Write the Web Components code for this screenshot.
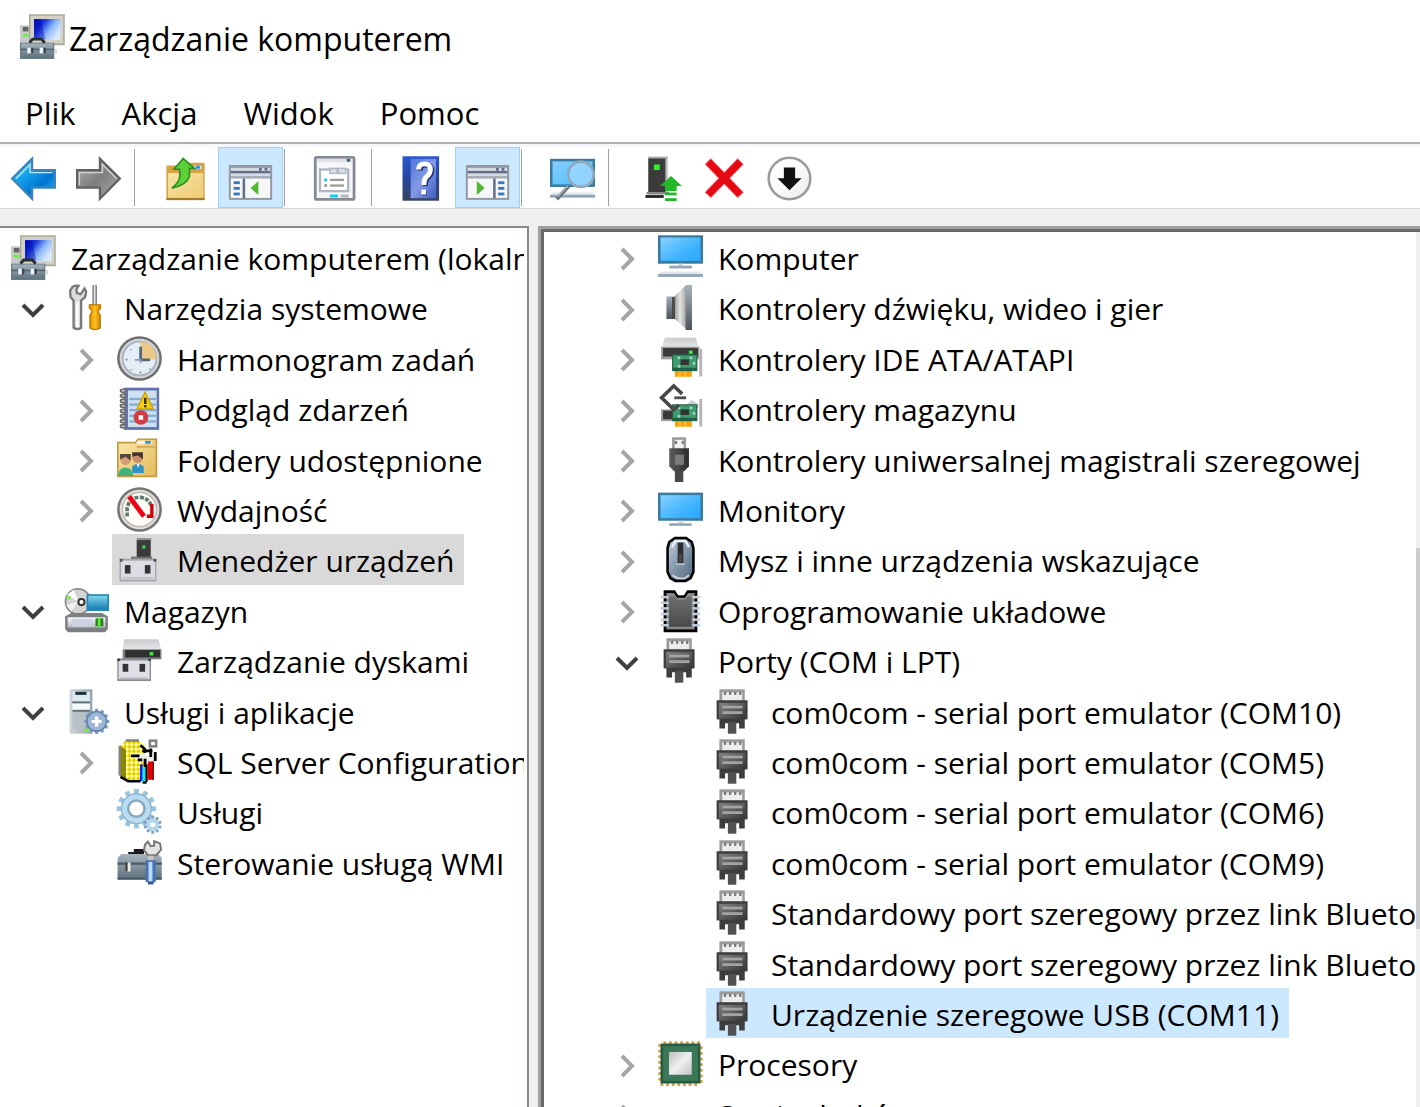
<!DOCTYPE html>
<html lang="pl">
<head>
<meta charset="utf-8">
<title>Zarządzanie komputerem</title>
<style>
  html, body { margin: 0; height: 100%; }
  body { background: #fff; color: #000; font: 31px/50px "Open Sans", "Noto Sans", sans-serif; overflow: hidden; }
</style>
</head>
<body>
<console-window>
  <title-bar slot="title" icon="computer">Zarządzanie komputerem</title-bar>
  <menu-bar slot="menu">
    <menu-entry>Plik</menu-entry>
    <menu-entry>Akcja</menu-entry>
    <menu-entry>Widok</menu-entry>
    <menu-entry>Pomoc</menu-entry>
  </menu-bar>
  <tool-bar slot="tools">
    <tool-button icon="back" label="Wstecz"></tool-button>
    <tool-button icon="forward" label="Dalej"></tool-button>
    <tool-separator></tool-separator>
    <tool-button icon="folder-up" label="W górę"></tool-button>
    <tool-button icon="tree-toggle" label="Drzewo konsoli" pressed></tool-button>
    <tool-separator></tool-separator>
    <tool-button icon="properties" label="Właściwości"></tool-button>
    <tool-separator></tool-separator>
    <tool-button icon="help" label="Pomoc"></tool-button>
    <tool-button icon="action-toggle" label="Okienko akcji" pressed></tool-button>
    <tool-separator></tool-separator>
    <tool-button icon="scan" label="Skanuj"></tool-button>
    <tool-separator></tool-separator>
    <tool-button icon="update" label="Aktualizuj sterownik"></tool-button>
    <tool-button icon="remove" label="Odinstaluj"></tool-button>
    <tool-button icon="disable" label="Wyłącz"></tool-button>
  </tool-bar>
  <tree-pane slot="left" kind="plain">
    <tree-row level="0" icon="computer">Zarządzanie komputerem (lokalny)</tree-row>
    <tree-row level="1" icon="tools" state="open">Narzędzia systemowe</tree-row>
    <tree-row level="2" icon="clock" state="closed">Harmonogram zadań</tree-row>
    <tree-row level="2" icon="events" state="closed">Podgląd zdarzeń</tree-row>
    <tree-row level="2" icon="shared" state="closed">Foldery udostępnione</tree-row>
    <tree-row level="2" icon="gauge" state="closed">Wydajność</tree-row>
    <tree-row level="2" icon="devmgr" selected="muted">Menedżer urządzeń</tree-row>
    <tree-row level="1" icon="storage" state="open">Magazyn</tree-row>
    <tree-row level="2" icon="disk">Zarządzanie dyskami</tree-row>
    <tree-row level="1" icon="services-apps" state="open">Usługi i aplikacje</tree-row>
    <tree-row level="2" icon="sql" state="closed">SQL Server Configuration Manager</tree-row>
    <tree-row level="2" icon="gears">Usługi</tree-row>
    <tree-row level="2" icon="wmi">Sterowanie usługą WMI</tree-row>
  </tree-pane>
  <tree-pane slot="right" kind="sunken" scroll>
    <tree-row level="2" icon="pc" state="closed">Komputer</tree-row>
    <tree-row level="2" icon="speaker" state="closed">Kontrolery dźwięku, wideo i gier</tree-row>
    <tree-row level="2" icon="ide" state="closed">Kontrolery IDE ATA/ATAPI</tree-row>
    <tree-row level="2" icon="storage-ctl" state="closed">Kontrolery magazynu</tree-row>
    <tree-row level="2" icon="usb" state="closed">Kontrolery uniwersalnej magistrali szeregowej</tree-row>
    <tree-row level="2" icon="monitor" state="closed">Monitory</tree-row>
    <tree-row level="2" icon="mouse" state="closed">Mysz i inne urządzenia wskazujące</tree-row>
    <tree-row level="2" icon="firmware" state="closed">Oprogramowanie układowe</tree-row>
    <tree-row level="2" icon="port" state="open">Porty (COM i LPT)</tree-row>
    <tree-row level="3" icon="port">com0com - serial port emulator (COM10)</tree-row>
    <tree-row level="3" icon="port">com0com - serial port emulator (COM5)</tree-row>
    <tree-row level="3" icon="port">com0com - serial port emulator (COM6)</tree-row>
    <tree-row level="3" icon="port">com0com - serial port emulator (COM9)</tree-row>
    <tree-row level="3" icon="port">Standardowy port szeregowy przez link Bluetooth</tree-row>
    <tree-row level="3" icon="port">Standardowy port szeregowy przez link Bluetooth</tree-row>
    <tree-row level="3" icon="port" selected="active">Urządzenie szeregowe USB (COM11)</tree-row>
    <tree-row level="2" icon="cpu" state="closed">Procesory</tree-row>
    <tree-row level="2" icon="drive" state="closed">Stacje dysków</tree-row>
  </tree-pane>
</console-window>

<script>
// Gradient helper: lin(id, x2, y2, colour, colour, ...) over the shape's box.
const lin = (id, x2, y2, ...c) => `<linearGradient id="${id}" x1="0" y1="0" x2="${x2}" y2="${y2}">` +
  c.map((k, i) => `<stop offset="${i / (c.length - 1)}" stop-color="${k}"/>`).join('') + '</linearGradient>';
const r = (x, y, w, h, f, extra = '') => `<rect x="${x}" y="${y}" width="${w}" height="${h}" fill="${f}" ${extra}/>`;
const teeth = (cx, cy, r0, n, w, fill) => Array.from({ length: n }, (_, i) =>
  `<rect x="${cx - w / 2}" y="${cy - r0}" width="${w}" height="${r0}" fill="${fill}" transform="rotate(${i * 360 / n} ${cx} ${cy})"/>`).join('');

const card = `<rect x="14.7" y="4.6" width="1" height="9.8" fill="#b4b4b4"/>` + r(6, 12.2, 6, 2.3, '#f5a30a') +
  r(7.6, 12.2, .4, 2.3, '#ffd060') + r(9.4, 12.2, .4, 2.3, '#ffd060') +
  r(5, 6.5, 9, 6, '#1f6243') + r(5.4, 6.9, 8.2, 4.4, '#3f9b70') + r(8, 8.3, 3, 2, '#333') +
  r(7, 7.3, .9, .9, '#a9d9c0') + r(7, 10.3, .9, .9, '#a9d9c0') + r(11.3, 7.3, .9, .9, '#a9d9c0') + r(12.3, 9.3, .9, .9, '#a9d9c0');
const paneIcon = body => r(.3, 3.2, 15.4, 12.4, '#9098a2') + r(1, 4.2, 14, 1.2, '#d5dae3') + r(11, 4.2, 1, 1, '#5b6b88') + r(13, 4.2, 1, 1, '#5b6b88') +
  r(1, 5.3, 14, .8, '#5f6e89') + r(1, 6.2, 14, 1.1, '#d5dae3') + r(1, 7.2, 14, .8, '#a4abb6') + r(1, 8, 14, 6.9, '#f7f7f7') + body;
const wrench = `<path d="M3.1 .6 2.2 2 2.3 4.3 3.4 5.5V15.2Q4.7 16.2 6.1 15.2V5.5L7.5 4.3 7.9 2.4 7.3 1.2 5.9 3.3 4.6 2.9 4.4 1.6 5.2.3Q4 .1 3.1 .6Z" fill="#dcdcdc" stroke="#777" stroke-width=".8"/>`;

const ICONS = {
  computer: `<defs>${lin('a', 1, .6, '#0008b8', '#1634dc', '#8db8fa', '#dcebff')}${lin('b', 0, 1, '#a2b1ba', '#5d7380')}</defs>` +
    r(0, 4, 3.3, 7, '#c9cbcb') + r(1, 4.6, 2, 1.6, '#666') + r(1, 7, 2, 1, '#66ee44') +
    r(3.2, .1, 12.7, 11, '#aaa798') + r(3.7, .6, 11.7, 9.9, '#d3d0c5') + r(5, 1.8, 9.4, 7.4, 'url(#a)') +
    `<path d="M7.4 2 9 9H5V2z" fill="#0006a8" opacity=".4"/>` +
    r(0, 10.2, 12.2, 5.8, '#6a7c87') + r(.4, 10.5, 11.4, 5.1, 'url(#b)') + r(0, 12.3, 12.2, .6, '#56666f') +
    `<path d="M3.4 10.2 4.5 8.9H7.6L8.8 10.2" fill="none" stroke="#282c30" stroke-width="1"/>` +
    r(2.6, 12, 1.2, 2, '#eef3f5') + r(4, 12, .7, 2, '#39444b') + r(7, 12, 1.2, 2, '#eef3f5') + r(8.5, 12, .7, 2, '#39444b') + r(12.3, 12.5, .9, 1.5, '#d8d8d8'),
  tools: `<defs>${lin('a', 1, 0, '#d88a00', '#ffc421', '#d08000')}</defs>` + wrench + r(4.3, 6, .9, 9, '#fff') +
    r(10.1, .1, 1.6, 7, '#777') + r(10.6, .3, .6, 6.7, '#e8e8e8') +
    `<path d="M9 7H13V8.3L12.1 9.3 12.9 10.8V15.3Q11 16.4 9.2 15.3V10.8L10 9.3 9 8.3Z" fill="url(#a)" stroke="#b87500" stroke-width=".4"/>`,
  clock: `<circle cx="8" cy="8" r="7.5" fill="#d6d8d9" stroke="#707070" stroke-width=".9"/><circle cx="8" cy="8" r="6" fill="#e4eef7" stroke="#a8b4bf" stroke-width=".7"/>
    <path d="M8.3 8V2Q13.8 2.4 14 8.4Z" fill="#ecc988"/><path d="M8.4 3.8V8.5H11.8" fill="none" stroke="#52697b" stroke-width="1"/><path d="M6.3 8.5H8.4V9.6" fill="none" stroke="#8fa2b0" stroke-width=".6"/>
    <g fill="#8397a6"><circle cx="3.4" cy="8.4" r=".4"/><circle cx="8.3" cy="13" r=".4"/><circle cx="5" cy="12" r=".3"/><circle cx="5" cy="4.8" r=".3"/><circle cx="11.8" cy="11.8" r=".3"/></g>`,
  events: r(2.4, .6, 12.6, 15, '#5f73ad') + r(3.9, 1.6, 10.2, 13, '#cfe0f1') +
    [4.2, 6.2, 8.2, 10.2, 12.2].map(y => r(4.4, y, 9.5, .8, '#7fadd3')).join('') + r(2.8, 1.2, .8, 13.6, '#6d7cb4') +
    [1, 2.8, 4.6, 6.4, 8.2, 10, 11.8, 13.6].map(y => `<ellipse cx="2.2" cy="${y + .7}" rx="1" ry=".6" fill="#b8b8b8" stroke="#666" stroke-width=".5"/>`).join('') +
    `<path d="M10 2.2 12.9 8.2H7.1Z" fill="#f0cd1c" stroke="#c9a400" stroke-width=".5"/>` + r(9.6, 4.2, .9, 2.2, '#403300') + r(9.6, 6.8, .9, .8, '#403300') +
    `<circle cx="8.5" cy="11.2" r="2.6" fill="#d23c43"/><rect x="7.7" y="10.4" width="1.6" height="1.6" fill="#fff"/>`,
  shared: `<defs>${lin('a', 1, 1, '#fbe7ac', '#e3bb5a')}</defs><path d="M.3 2H6.6L7.4.8H14V14H.3Z" fill="url(#a)" stroke="#c39a42" stroke-width=".6"/>` +
    r(7, 1.6, 5.4, .8, '#fff') + r(10, 1.4, 2, 1, '#2f8fec') + r(7, 3.2, 6.6, .6, '#d1a952') +
    `<circle cx="7.3" cy="7.4" r="1.8" fill="#c98f6c"/><path d="M5.4 7V5.4H9.2V8L7.5 6.6Z" fill="#41362d"/><path d="M5.4 12.8V10.5Q7.4 8.6 9.5 10.5V12.8Z" fill="#2e92c9"/><path d="M7 9.6 7.5 11 8 9.6Z" fill="#fff"/>
    <circle cx="3" cy="8.2" r="1.8" fill="#d59c7a"/><path d="M1.1 8V6H4.9V8.4L3 7Z" fill="#54463a"/><path d="M.3 13.9Q.6 10.8 3 10.8T5.8 13.9Z" fill="#3eb37e"/>`,
  gauge: `<circle cx="8" cy="8" r="7.5" fill="#e2e1df" stroke="#747474" stroke-width=".9"/><circle cx="8" cy="8" r="6.1" fill="#fffdf8" stroke="#c3bdb4" stroke-width=".6"/>
    <path d="M3.6 10.5V7.5Q4.4 3.8 8 3.6Q11.4 4 12.3 7" fill="none" stroke="#5b7a68" stroke-width="1.3" stroke-dasharray="1.4 .5"/>
    <path d="M12.4 6V10.4H10.6" fill="none" stroke="#d0000c" stroke-width="1.2"/><path d="M4.3 3.4 9.6 10.4" stroke="#f30014" stroke-width="1.7"/>`,
  devmgr: r(7, .4, 5.2, .8, '#8e8e8e') + r(7, 1.1, 5, 6.2, '#3b3b3b') + r(9, 3, 1.1, 1.1, '#36e34c') + r(5, 7, 7.5, .8, '#6f6f6f') +
    r(.9, 7.7, 13.1, 8.1, '#a5a5ae') + r(1.4, 8.4, 12.1, 6.8, '#dcdce4') + r(2, 14.2, 11, .9, '#c3c3cc') + r(2.8, 10, 2, 3, '#333') + r(9.9, 10, 2, 3, '#333') + r(1, 7.8, 1, 1, '#555') + r(13, 7.8, 1, 1, '#555'),
  storage: `<defs>${lin('a', 0, 1, '#7fd3ef', '#1782b3')}${lin('b', 0, 1, '#f7f7fa', '#b9bcc4')}</defs>
    <circle cx="5" cy="4.8" r="4.5" fill="#d4d4d4" stroke="#8b8b8b" stroke-width=".6"/><path d="M5 4.8 1 2.5 3.5.6Z" fill="#fff"/><path d="M5 4.8 .8 6 2.6 8.4Z" fill="#f1f1f1"/><circle cx="1.7" cy="3.5" r=".8" fill="#8be85b"/><circle cx="6.2" cy="5" r="1.1" fill="#fff" stroke="#333" stroke-width=".7"/>` +
    r(8, 2.2, 8, 6, '#2887ae') + r(8.6, 2.8, 6.8, 4.6, 'url(#a)') +
    `<path d="M.4 10 2.6 8.9H13.5L15.6 10V14.6L14.6 15.7H1.4L.4 14.6Z" fill="#7d7f84"/><path d="M1.3 10.4H14.7V14H1.3Z" fill="url(#b)"/>` + r(3, 11, 7, 2.6, '#cfd2e2') + r(11.2, 10.8, 2.8, 2.8, '#2e7a25') + r(12, 10.6, 1, 3.2, '#4cf02c'),
  disk: `<defs>${lin('a', 0, 1, '#c9cacc', '#e6e7e8')}</defs><path d="M2.6.4H14.8L15.7 4.2H1.9Z" fill="url(#a)"/>` + r(2, 4, 13.8, 3.6, '#7f7f82') + r(2.9, 4.3, 12.4, 2.6, '#303030') + r(11.6, 5, 1.3, 1.2, '#38f545') +
    r(.1, 7.3, 12, 8, '#8c8c95') + r(.6, 8, 11, 6.6, '#dedee5') + r(1, 14, 10, .7, '#bcbcc5') + r(2, 9.2, 2, 2.8, '#333') + r(8, 9.2, 2, 2.8, '#333') + r(.1, 7.3, 1, .9, '#444') + r(11.1, 7.3, 1, .9, '#444'),
  drive: `<path d="M1.6 6H14.4L16 9.4H0Z" fill="#d9dadb"/>` + r(0, 9.4, 16, 4, '#9d9da0') + r(.8, 10, 14.4, 2.6, '#393939') + r(12, 10.8, 1.3, 1.1, '#43f352'),
  'services-apps': `<defs>${lin('a', 1, 0, '#cfd7dc', '#99a5ad')}</defs>` + r(2, .1, 8.1, 15.8, 'url(#a)') + r(3, 1, 6.2, 3.6, '#dcebf1') + r(4, 1, 4, 1.1, '#19343f') + r(3, 4.4, 6.2, .7, '#60707a') + r(3, 5.2, 6.2, 2.4, '#f5fafc') + r(3, 7.4, 6.2, .7, '#60707a') + r(3, 8.3, 5, 6, '#b8c1c8') +
    teeth(11.6, 11.5, 4.5, 12, 1.1, '#7d9cc0') + `<circle cx="11.6" cy="11.5" r="3.5" fill="#9cb7d6" stroke="#6585ab" stroke-width=".6"/><path d="M11 9.8h1.2v1.2h1.2v1.1h-1.2v1.2H11v-1.2H9.8V11H11z" fill="#fff"/>` + r(7.1, 14.1, 2, 1.1, '#7bea4c'),
  sql: `<defs><pattern id="p" width="1.6" height="1.6" patternUnits="userSpaceOnUse"><rect width="1.6" height="1.6" fill="#ffef00"/><rect width=".8" height=".8" fill="#fff"/><rect x=".8" y=".8" width=".8" height=".8" fill="#cdbb2a"/></pattern></defs>
    <path d="M1 2.5 3 .6H7.6L9.9 2.5V14L8 15H4L1 13Z" fill="url(#p)"/><path d="M1 2.5 3.2 3.7V14.6L1 13Z" fill="#8b8600"/><path d="M3.1.5H7.8M1 2.4V13" stroke="#808080" stroke-width=".9"/><path d="M1.2 13.5 4 15H8.4" fill="none" stroke="#000" stroke-width=".9"/>
    <path d="M8.3 2.2 9.9 3.6V5" fill="none" stroke="#000" stroke-width=".9"/>` +
    r(11.7, .6, 2.2, 2, '#fff', 'stroke="#808080" stroke-width=".9"') + `<path d="M6 5H9L10 6H14V8H9L5 6Z" fill="#eee"/><path d="M5 6H8M7.4 7.4H9M9 4.2H12.6M12 6.4V3.4M13.6 4.6V7.8M10 7V10" stroke="#000" stroke-width="1" fill="none"/>` +
    r(8.2, 9, .9, 6, '#0018ff') + r(9.1, 10.4, 1, 4.8, '#00f0ff') + r(10.1, 9, .8, 6.3, '#000') + r(9.1, 15.1, 1.4, .8, '#000') + r(11, 8, 2, 6.5, '#e40000') + r(12.6, 8, .5, 6.5, '#760000'),
  gears: teeth(6.9, 7, 7, 12, 1.7, '#9cc3dc') + `<circle cx="6.9" cy="7" r="5.3" fill="#b8dcf2" stroke="#8db6d2" stroke-width=".5"/><circle cx="6.9" cy="7" r="2.9" fill="#fff" stroke="#8ba8bd" stroke-width=".9"/>` +
    teeth(12.7, 12.7, 3.2, 10, 1, '#7ba3bf') + `<circle cx="12.7" cy="12.7" r="2.3" fill="#b4d6ea"/><circle cx="12.7" cy="12.7" r=".9" fill="#fff"/>`,
  wmi: `<defs>${lin('a', 0, 1, '#a5b3bc', '#5d717f')}</defs><path d="M4 5.4V4.3H6V3.2H9.6V5.4Z" fill="#1b1b1b"/><path d="M.2 6.3 1.6 5H14.6L15.9 6.3V14H.2Z" fill="url(#a)"/>` + r(.2, 8, 15.7, .8, '#4b5c68') + r(.2, 13.4, 15.7, .7, '#46545e') + r(3, 8, .8, 3, '#463a30') + r(3.8, 8, 1, 3.2, '#efefe5') +
    `<path d="M10 1.6 11 .6 12 2.2 13.2 2V.4L15.3 1.2 15.7 3.4 14 5.4H11L9.6 3.6Z" fill="#e4e4e4" stroke="#777" stroke-width=".7"/>` + r(11, 5.6, 2, 2, '#c7c7c7') + r(10.2, 7.2, 3.6, 7.8, '#4773b5') + r(11.2, 7.8, 1.4, 7, '#bcd8fa') + r(11, 14.8, 2, 1, '#35578c'),
  pc: `<defs>${lin('a', 1, .9, '#8ad1ff', '#62c2ff', '#3eb3ff', '#2aa9ff')}</defs>` + r(0, .1, 16, 10.1, '#397a9f') + r(.9, .9, 14.2, 8.3, 'url(#a)') + r(7.3, 10.2, 1.6, .8, '#cfdae2') + r(4, 10.9, 8, 1, '#95a7b6') + `<path d="M1 13H15L16 14H0Z" fill="#dfe5e9"/>` + r(0, 13.9, 16, 1, '#91a4b4'),
  monitor: `<defs>${lin('a', 1, .9, '#8ad1ff', '#62c2ff', '#3eb3ff', '#2aa9ff')}</defs>` + r(0, 2, 16, 10, '#397a9f') + r(.9, 2.9, 14.2, 8.2, 'url(#a)') + r(7.3, 12, 1.6, .8, '#cfdae2') + r(4, 12.9, 8, .9, '#91a4b4'),
  speaker: `<defs>${lin('a', 1, 0, '#8b8b8b', '#e4e4e4', '#9e9e9e')}${lin('b', 0, 1, '#a7b3bd', '#4e5357')}${lin('c', 0, 1, '#9eacb8', '#4b545b')}</defs><path d="M5.5 4.4 9 .9 10.2.1V15.6L9 14.8 5.5 11.6Z" fill="url(#a)"/>` + r(3, 4.1, 3, 8, 'url(#c)') + r(5, 4.3, 1, 7.8, '#494949') + r(9.8, 0, 2.3, 16, 'url(#b)'),
  ide: `<defs>${lin('a', 0, 1, '#c9cacc', '#e6e7e8')}</defs><path d="M2.5.6H13.5L14.4 3.9H1.3Z" fill="url(#a)"/>` + r(1.1, 3.8, 13.6, 4.5, '#9d9da0') + r(1.8, 4.3, 12.4, 3, '#393939') + r(11, 5.2, 1.3, 1.1, '#43f352') + card,
  'storage-ctl': r(1.1, 8.3, 9, 4.2, '#9d9da0') + r(1.8, 8.8, 6, 3, '#393939') + `<path d="M9 7.5 12 5 14.4 6.5V8Z" fill="#c9cdd2"/>` + card +
    `<path d="M8.6 2.8 5.6 0 1.3 4.2 5.6 8.4 7.4 6.8" fill="none" stroke="#474747" stroke-width="1.3"/><path d="M5.8 4.2H10" stroke="#4c4c4c" stroke-width="1"/>`,
  usb: `<defs>${lin('a', 1, 0, '#5b5b5b', '#454545', '#2b2b2b')}</defs>` + r(5, .1, 5, 4.4, '#9b9b9b') + r(6, 1, 3.1, 3.4, '#f2f2f2') + r(6, 1.4, .8, 1.1, '#777') + r(8.4, 1.4, .8, 1.1, '#777') + `<path d="M4 4H11V10.4L9.3 12.2H5.7L4 10.4Z" fill="url(#a)"/>` + r(6, 6.3, 3.2, 3.6, '#7b7b7b') + r(6, 11.8, 3, 4.2, '#494949'),
  mouse: `<defs>${lin('a', 1, 1, '#c1d0df', '#8296aa', '#52667d')}</defs><path d="M6 .4H10L12 1.8 12.6 4V12.4L11.6 14.6 9.8 15.6H6.2L4.4 14.6 3.4 12.4V4L4 1.8Z" fill="url(#a)" stroke="#000" stroke-width=".9"/><path d="M5 3.6 6.2 1.4H9.8L11 3.6" fill="none" stroke="#f1f5fa" stroke-width=".8"/><path d="M5.2 13.6 7 14.7H9.4L11 13.6" fill="none" stroke="#d4dbe2" stroke-width=".6"/>` + r(7, 2, 2, 7.4, '#2c2c2c') + r(7.4, 6, 1.2, 3, '#484848') + r(6.4, 9.3, 3.2, .7, '#a8b9ca'),
  firmware: `<defs>${lin('a', 0, 1, '#6e6e6e', '#4a4a4a')}</defs><path d="M2 .8H6L7 2.4H9.4L10.4.8H14V15.7H2Z" fill="#050505"/>` + r(3, 1.8, 10, 12.9, '#8a8a8a') + `<path d="M3.9 3H6L7 4.2H9.6L10.7 3H12V13.8H3.9Z" fill="url(#a)"/><path d="M6 1 7 2.6H9.4L10.4 1Z" fill="#fff"/><path d="M5.8 1.2 7 3.1H9.4L10.6 1.2" fill="none" stroke="#000" stroke-width=".8"/>` +
    [2.8, 4.8, 6.8, 8.8, 10.8, 12.8].map(y => r(1, y, 2.8, .9, '#c1ced9') + r(12.2, y, 2.8, .9, '#c1ced9')).join(''),
  port: `<defs>${lin('a', 1, 1, '#808080', '#5c5c5c', '#343434')}</defs>` + r(3, .1, 9, 4.1, '#9b9b9b') + r(4, 1.2, 7.1, 3, '#ededed') + [4.6, 6.4, 8.2, 10].map(x => r(x, 1, .8, 1.1, '#777')).join('') +
    r(2, 4, 11, 6.8, '#3d3d3d') + r(2.8, 4.9, 9.4, 5.9, 'url(#a)') + r(4, 5.9, 7.2, 1, '#a3a3a3') + r(4, 7.9, 7.2, 1, '#a3a3a3') + `<path d="M3 10.6H12V14H10V12.2H5V14H3Z" fill="#3d3d3d"/>` + r(6, 11.8, 3, 4.1, '#515151'),
  cpu: `<defs>${lin('a', 1, 1, '#bcbcbc', '#f0f0f0', '#c3c3c3')}</defs>` + [1.9, 3.9, 5.9, 7.9, 9.9, 11.9, 13.9].map(v => r(v, .1, 1, 1.2, '#d0a145') + r(v - 1, 14.8, 1, 1.2, '#d0a145') + r(.1, v - .8, 1.2, 1, '#d0a145') + r(14.7, v, 1.2, 1, '#d0a145')).join('') +
    r(.9, .9, 14.2, 14.2, '#265b43') + r(1.8, 1.8, 12.4, 12.4, '#3a7857') + r(3.9, 3.9, 8.1, 8.1, 'url(#a)'),
  back: `<defs>${lin('a', 1, 1, '#7fdcff', '#16a6ee', '#0073cf', '#2cc4ff')}</defs><path d="M.4 8 7.5 1V5H15.6V11.2H7.5V15.2Z" fill="url(#a)" stroke="#3b85bb" stroke-width=".8"/><path d="M1.8 8 6.8 3V5.9H14.8" fill="none" stroke="#b5e6fa" stroke-width=".5"/>`,
  forward: `<defs>${lin('a', 1, 1, '#b4b4b4', '#7e7e7e', '#aaa')}</defs><path d="M15.6 8 8.5 1V5H.4V11.2H8.5V15.2Z" fill="url(#a)" stroke="#606060" stroke-width=".8"/><path d="M1.2 10.4V5.9H9.4V3L14.4 8" fill="none" stroke="#d2d2d2" stroke-width=".5"/>`,
  'folder-up': `<defs>${lin('a', 1, 1, '#f8e4a8', '#eecb70')}</defs><path d="M1.2 3.4H8.3L9.5 2.4H14.8V15.6H1.2Z" fill="#d5a548"/><path d="M1.8 6H14.3V15H1.8Z" fill="url(#a)"/>` + r(10.4, 3.6, 3.2, 1, '#fff') + r(11.6, 3.6, 1.6, .9, '#2c88ea') + r(1.2, 14.9, 13.6, .8, '#a57c27') +
    `<path d="M7.2.9 11.2 4.4H9.4V7.4Q8.3 10.4 3.2 11.4Q6.2 9 6 6.6L5.9 4.7H3.9Z" fill="#5cd238" stroke="#2b8f22" stroke-width=".6"/>`,
  'tree-toggle': paneIcon(r(2, 9, 2.2, 1, '#3277c0') + r(2, 11, 2.2, 1, '#3277c0') + r(2, 13, 2.2, 1, '#3277c0') + r(5.2, 8, .9, 7, '#5f6e89') + `<path d="M8 11.4 10.8 8.9V13.9Z" fill="#55b636"/>`),
  'action-toggle': paneIcon(r(11.8, 9, 2.2, 1, '#3277c0') + r(11.8, 11, 2.2, 1, '#3277c0') + r(11.8, 13, 2.2, 1, '#3277c0') + r(10, 8, .9, 7, '#5f6e89') + `<path d="M7 11.4 4.2 8.9V13.9Z" fill="#55b636"/>`),
  properties: r(.8, .5, 13.8, 14.9, '#f6f6f6', 'rx=".5" stroke="#858a92" stroke-width="1"') + r(1.4, 1, 12.6, 1.2, '#dfe2e6') + r(12, 1, 1.2, 1, '#475670') + r(2.5, 4.8, 10, 7.7, '#fff', 'stroke="#aeb4c1" stroke-width=".8"') +
    r(6, 4.4, 2.6, 1.8, '#dadde4', 'stroke="#aeb4c1" stroke-width=".5"') + r(9, 4.4, 2.6, 1.8, '#dadde4', 'stroke="#aeb4c1" stroke-width=".5"') + r(4, 8, 1, 1, '#19c6ef') + r(6, 8.1, 5, .8, '#999') + r(4, 10, 1, 1, '#999') + r(6, 10.1, 5, .8, '#999') + r(6, 13.7, 2.9, 1.1, '#16ccf5') + r(9.8, 13.7, 2.9, 1.1, '#bbb'),
  help: `<defs>${lin('a', 0, 1, '#2a56d0', '#27479d', '#38435f')}${lin('b', 1, 1, '#4f76e0', '#8499e5', '#3e5cc5')}</defs>` + r(.9, .1, 13, 15.8, 'url(#a)') + r(3.8, 1, 9, 14, 'url(#b)') +
    `<path d="M6.6 4.8Q6.7 2.8 8.6 2.8 10.9 2.8 10.8 5 10.7 6.4 9.2 7.6 8.5 8.4 8.5 10.3" fill="none" stroke="#26366f" stroke-width="1.8" transform="translate(.5 .4)"/><path d="M6.6 4.8Q6.7 2.8 8.6 2.8 10.9 2.8 10.8 5 10.7 6.4 9.2 7.6 8.5 8.4 8.5 10.3" fill="none" stroke="#fff" stroke-width="1.7"/>` + r(8, 12.3, 1.6, 1.7, '#26366f') + r(7.6, 11.9, 1.7, 1.8, '#fff'),
  scan: `<defs>${lin('a', 1, 1, '#86cdfc', '#4cbcff')}</defs>` + r(0, 1, 16, 10, '#397a9f') + r(.9, 1.9, 14.2, 8.2, 'url(#a)') + `<path d="M1 13H15L16 14H0Z" fill="#dfe5e9"/>` + r(0, 13.8, 16, 1, '#91a4b4') +
    `<path d="M6.8 10.6 2.4 15.4" stroke="#6d757c" stroke-width="1.3"/><path d="M6.4 10.6 2.8 14.4" stroke="#aab3bb" stroke-width=".5"/><circle cx="11" cy="6.5" r="4.5" fill="#9bd6ff" fill-opacity=".85" stroke="#8fa9ba" stroke-width=".9"/>`,
  update: r(4, .2, 7, .9, '#aaa') + r(4, .9, 6.2, 12, '#3b3b3b') + r(10.2, .8, .7, 12, '#b9b9b9') + r(6, 3, 2.1, 2, '#2bf026') + r(3.4, 12.8, 8, .9, '#888') + r(3, 13.9, 6.5, 1, '#222') +
    `<path d="M12.1 7.1 16 10.7H14.1V12.4H10V10.7H8.1Z" fill="#24b829"/>` + r(10, 13, 4.1, 1, '#24b829') + r(10, 15, 4.1, 1, '#24b829'),
  remove: `<path d="M2 1.8 13.8 14M13.8 1.8 2 14" stroke="#f7a4a9" stroke-width="3.2"/><path d="M2.2 2 13.6 13.8M13.6 2 2.2 13.8" stroke="#e50914" stroke-width="2.6"/>`,
  disable: `<defs>${lin('a', 1, 1, '#fff', '#fafafa', '#ebebeb')}</defs><circle cx="8" cy="8" r="7.4" fill="url(#a)" stroke="#9b9b9b" stroke-width=".9"/><path d="M6 4.1H10V7.9H12.3L8 12.2 3.7 7.9H6Z" fill="#111"/>`
};

const define = (name, css, html, setup) => customElements.define(name, class extends HTMLElement {
  constructor() {
    super();
    this.attachShadow({ mode: 'open' }).innerHTML = `<style>:host,*{box-sizing:border-box}${css}</style>${html(this)}`;
  }
  connectedCallback() { if (setup) setup(this); }
});

define('pixel-icon', ':host{display:block;flex:none;width:45px;height:45px}svg{display:block;width:100%;height:100%;overflow:visible}',
  el => `<svg viewBox="0 0 16 16" aria-hidden="true">${ICONS[el.getAttribute('name')] || ''}</svg>`);

define('title-bar', ':host{display:flex;align-items:flex-start;gap:4px;height:84px;padding:14px 20px;font-size:32px}',
  el => `<pixel-icon name="${el.getAttribute('icon')}"></pixel-icon><span><slot></slot></span>`);

define('menu-bar', ':host{display:flex;padding:4px 2px}', () => '<slot></slot>', el => el.setAttribute('role', 'menubar'));

define('menu-entry', ':host{display:block}button{height:50px;padding:0 23px;border:0;background:none;color:inherit;font:inherit}button:hover{background:#e5f3ff}',
  () => '<button type="button" role="menuitem"><slot></slot></button>');

define('tool-bar', ':host{display:flex;align-items:stretch;height:67px;padding:3px 1px 0;background:#fff;border-top:2px solid #b0b0b0;border-bottom:1px solid #d9d9d9;box-shadow:inset 0 3px #f5f9fe}',
  () => '<slot></slot>', el => el.setAttribute('role', 'toolbar'));

define('tool-button', ':host{display:block;width:65px}:host([pressed]){margin-right:-2px}button{display:flex;justify-content:center;align-items:center;width:100%;height:100%;padding:2px 0 0;border:1px solid transparent;background:none}button:hover{background:#e5f3ff}:host([pressed]) button{background:#cce8ff;border-color:#99d1ff}',
  el => `<button type="button" aria-label="${el.getAttribute('label')}" aria-pressed="${el.hasAttribute('pressed')}"><pixel-icon name="${el.getAttribute('icon')}"></pixel-icon></button>`);

define('tool-separator', ':host{display:block;width:22px;padding:2px 0 2px 3px}i{display:block;width:1px;height:100%;background:#a0a0a0}', () => '<i></i>');

// Both panes lay their rows on the same repeating 50/51 px track pattern.
define('tree-pane', `
  :host{display:flex;min-width:0;min-height:0;background:#fff;overflow:hidden;font-size:30px}
  :host([kind=plain]){--indent:6px;border-top:2px solid #828790;border-right:2px solid #828790;padding:4px 3px 0 0}
  :host([kind=sunken]){--indent:3px;border-top:3px solid #a0a0a0;border-left:3px solid #a0a0a0;box-shadow:inset 3px 3px #696969;padding:3px 0 0 3px}
  .rows{flex:1;min-width:0;display:grid;grid-auto-rows:50px 51px 50px 51px 50px;align-content:start;overflow:hidden}
  .bar{display:none;flex:none;width:4px;margin-left:1px;background:#f0f0f0;flex-direction:column}
  :host([scroll]) .bar{display:flex}
  .bar i{flex:316}.bar b{flex:381;background:#cdcdcd}.bar u{flex:178}`,
  () => '<div class="rows"><slot></slot></div><div class="bar"><i></i><b></b><u></u></div>',
  el => el.setAttribute('role', 'tree'));

define('tree-row', `
  :host{display:flex;align-items:stretch;white-space:nowrap;outline:none}
  .twist{flex:none;width:53px;padding:4px 0 0;border:0;background:none;display:flex;align-items:center;justify-content:center}
  .twist svg{width:24px;height:24px;fill:none;stroke:#a6a6a6;stroke-width:4}
  .twist.open svg{stroke:#404040}
  .label{display:flex;align-items:stretch;gap:15px;padding:0 10px 0 5px}
  .label pixel-icon{margin-top:3px}
  .text{padding-top:2px;line-height:50px;height:50px}
  :host([selected=muted]) .label{background:#d9d9d9}
  :host([selected=active]) .label{background:#cce8ff}`,
  el => {
    const level = +el.getAttribute('level'), state = el.getAttribute('state');
    const pad = level ? (level - 1) * 53 : 0;
    const twist = !level ? '' : state
      ? `<button type="button" class="twist ${state}" aria-label="${state === 'open' ? 'Zwiń' : 'Rozwiń'}"><svg viewBox="0 0 24 24"><path d="${state === 'open' ? 'M2 7 12 17 22 7' : 'M7 2 17 12 7 22'}"/></svg></button>`
      : '<span class="twist"></span>';
    return `<style>:host{padding-left:calc(var(--indent) + ${pad}px)}</style>${twist}<span class="label"><pixel-icon name="${el.getAttribute('icon')}"></pixel-icon><span class="text"><slot></slot></span></span>`;
  },
  el => {
    el.setAttribute('role', 'treeitem');
    el.setAttribute('aria-level', +el.getAttribute('level') + 1);
    if (el.hasAttribute('selected')) el.setAttribute('aria-selected', 'true');
    if (el.hasAttribute('state')) el.setAttribute('aria-expanded', el.getAttribute('state') === 'open');
  });

define('console-window', `
  :host{display:flex;flex-direction:column;height:100vh;background:#fff}
  .split{flex:1;min-height:0;display:grid;grid-template-columns:529px minmax(0,1fr);grid-template-rows:minmax(0,1fr);gap:9px;padding-top:17px;background:#f0f0f0}`,
  () => '<slot name="title"></slot><slot name="menu"></slot><slot name="tools"></slot><div class="split"><slot name="left"></slot><slot name="right"></slot></div>');
</script>
</body>
</html>
